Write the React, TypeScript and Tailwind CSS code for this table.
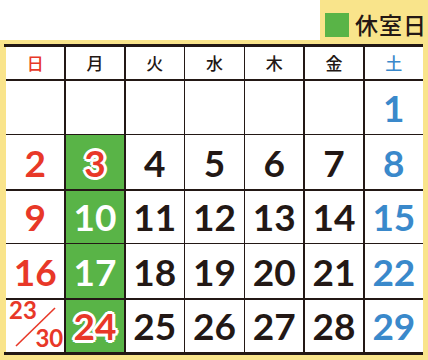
const RED = "text-[#e83828]"
const BLUE = "text-[#3a89cb]"
const INK = "text-[#231815]"

const days = [
  { label: "日", color: RED },
  { label: "月", color: INK },
  { label: "火", color: INK },
  { label: "水", color: INK },
  { label: "木", color: INK },
  { label: "金", color: INK },
  { label: "土", color: BLUE },
]

const outline =
  "[text-shadow:2px_0_0_#fff,-2px_0_0_#fff,0_2px_0_#fff,0_-2px_0_#fff,2px_2px_0_#fff,-2px_-2px_0_#fff,2px_-2px_0_#fff,-2px_2px_0_#fff,3px_0_0_#fff,-3px_0_0_#fff,0_3px_0_#fff,0_-3px_0_#fff]"

type Cell = { n?: string; color?: string; green?: boolean; outlined?: boolean; split?: boolean }

const weeks: Cell[][] = [
  [{}, {}, {}, {}, {}, {}, { n: "1", color: BLUE }],
  [
    { n: "2", color: RED },
    { n: "3", color: RED, green: true, outlined: true },
    { n: "4" },
    { n: "5" },
    { n: "6" },
    { n: "7" },
    { n: "8", color: BLUE },
  ],
  [
    { n: "9", color: RED },
    { n: "10", color: "text-white", green: true },
    { n: "11" },
    { n: "12" },
    { n: "13" },
    { n: "14" },
    { n: "15", color: BLUE },
  ],
  [
    { n: "16", color: RED },
    { n: "17", color: "text-white", green: true },
    { n: "18" },
    { n: "19" },
    { n: "20" },
    { n: "21" },
    { n: "22", color: BLUE },
  ],
  [
    { split: true },
    { n: "24", color: RED, green: true, outlined: true },
    { n: "25" },
    { n: "26" },
    { n: "27" },
    { n: "28" },
    { n: "29", color: BLUE },
  ],
]

const DayCell = ({ cell }: { cell: Cell }) => {
  if (cell.split) {
    return (
      <div className="relative bg-white font-['Lato',sans-serif] font-bold text-[#e83828]">
        <span className="absolute left-[3px] top-[-2px] text-[24px] leading-none">23</span>
        <svg className="absolute left-0 top-0" width="59" height="52" viewBox="0 0 59 52">
          <line x1="49" y1="8" x2="10" y2="46" stroke="#e83828" strokeWidth="1.6" />
        </svg>
        <span className="absolute right-[1px] bottom-[2px] text-[24px] leading-none">30</span>
      </div>
    )
  }
  return (
    <div
      className={`flex items-center justify-center font-['Lato',sans-serif] font-bold text-[37px] leading-none ${
        cell.green ? "bg-[#59b447]" : "bg-white"
      } ${cell.color ?? INK} ${cell.outlined ? outline : ""}`}
    >
      {cell.n}
    </div>
  )
}

export default function App() {
  return (
    <div className="w-[428px] h-[360px] bg-white flex flex-col">
      <div className="h-[40px] flex justify-end">
        <div className="w-[108px] bg-[#f9e48b] flex items-end pb-[3px] pl-[5px] gap-[6px]">
          <div className="w-[24px] h-[24px] bg-[#59b447]" />
          <span className="text-[23px] leading-[26px] text-[#231815] font-['Noto_Sans_CJK_JP',sans-serif] font-medium tracking-[1px]">
            休室日
          </span>
        </div>
      </div>
      <div className="flex-1 bg-[#f9e48b] pt-[4px] pl-[4px] pr-[5px]">
        <div className="border-y-[3px] border-[#231815] pl-[2px] bg-[#f9e48b]">
          <div className="grid grid-cols-7 grid-rows-[32px_53px_54px_52px_54px_52px] gap-[1.5px] bg-[#231815]">
            {days.map((d) => (
              <div
                key={d.label}
                className={`bg-white flex items-center justify-center text-[17px] font-medium font-['Noto_Sans_CJK_JP',sans-serif] ${d.color}`}
              >
                {d.label}
              </div>
            ))}
            {weeks.flat().map((c, i) => (
              <DayCell key={i} cell={c} />
            ))}
          </div>
        </div>
      </div>
    </div>
  )
}
